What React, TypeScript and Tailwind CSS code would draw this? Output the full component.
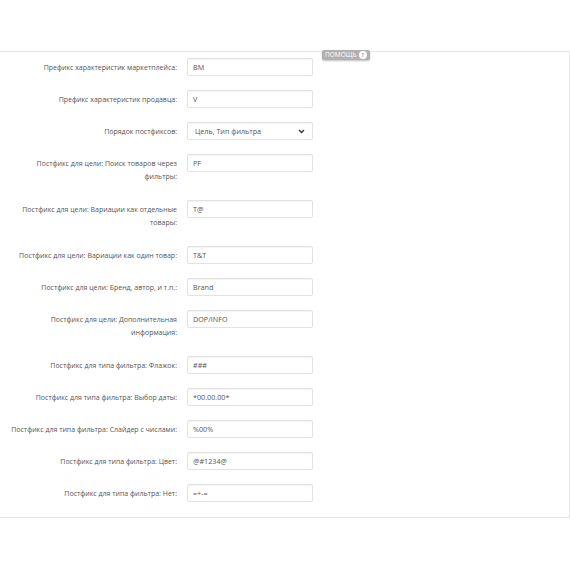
import React from "react";

type Row = {
  label: string[];
  value: string;
  select?: boolean;
};

const rows: Row[] = [
  { label: ["Префикс характеристик маркетплейса:"], value: "BM" },
  { label: ["Префикс характеристик продавца:"], value: "V" },
  { label: ["Порядок постфиксов:"], value: "Цель, Тип фильтра", select: true },
  { label: ["Постфикс для цели: Поиск товаров через", "фильтры:"], value: "PF" },
  { label: ["Постфикс для цели: Вариации как отдельные", "товары:"], value: "T@" },
  { label: ["Постфикс для цели: Вариации как один товар:"], value: "T&T" },
  { label: ["Постфикс для цели: Бренд, автор, и т.п.:"], value: "Brand" },
  { label: ["Постфикс для цели: Дополнительная", "информация:"], value: "DOP/INFO" },
  { label: ["Постфикс для типа фильтра: Флажок:"], value: "###" },
  { label: ["Постфикс для типа фильтра: Выбор даты:"], value: "*00.00.00*" },
  { label: ["Постфикс для типа фильтра: Слайдер с числами:"], value: "%00%" },
  { label: ["Постфикс для типа фильтра: Цвет:"], value: "@#1234@" },
  { label: ["Постфикс для типа фильтра: Нет:"], value: "=+-=" },
];

function FieldRow({ row }: { row: Row }) {
  const tall = row.label.length > 1;
  return (
    <div className={tall ? "flex items-start h-[32px]" : "flex items-start h-[18px]"}>
      <div className="w-[177px] shrink-0 text-right text-[7px] leading-[13px] pt-[2.5px] text-[#555]">
        {row.label.map((l, i) => (
          <div key={i} className="whitespace-nowrap">
            {l}
          </div>
        ))}
      </div>
      <div className="ml-[10px] w-[126px] h-[18px] shrink-0 flex items-center justify-between border border-[#e2e2e2] rounded-[2px] bg-white shadow-[inset_0_1px_1px_rgba(0,0,0,0.05)] px-[5px] text-[7.2px] text-[#555]">
        <span className={row.select ? "pl-[2px]" : ""}>{row.value}</span>
        {row.select && (
          <svg width="7" height="5" viewBox="0 0 7 5" className="mr-[2px]">
            <path d="M1 1l2.5 2.5L6 1" stroke="#333" strokeWidth="1.3" fill="none" />
          </svg>
        )}
      </div>
    </div>
  );
}

export default function App() {
  return (
    <div className="w-[570px] h-[570px] bg-white pt-[51px] [font-family:'Open_Sans','Liberation_Sans',sans-serif]">
      <div className="relative border-t border-b border-r border-[#e6e6e6] pt-[6px] pb-[15px]">
        <div className="absolute left-[322px] top-[-2px] h-[10px] flex items-center gap-[2px] bg-[#b0b0b0] rounded-[2px] px-[3px] shadow-[0_1px_2px_rgba(0,0,0,0.25)]">
          <span className="text-[6.5px] leading-none text-white uppercase">помощь</span>
          <span className="w-[8px] h-[8px] rounded-full bg-white text-[#b0b0b0] text-[6px] font-bold leading-none flex items-center justify-center">
            ?
          </span>
        </div>
        <div className="flex flex-col gap-[14px]">
          {rows.map((r, i) => (
            <FieldRow key={i} row={r} />
          ))}
        </div>
      </div>
    </div>
  );
}
